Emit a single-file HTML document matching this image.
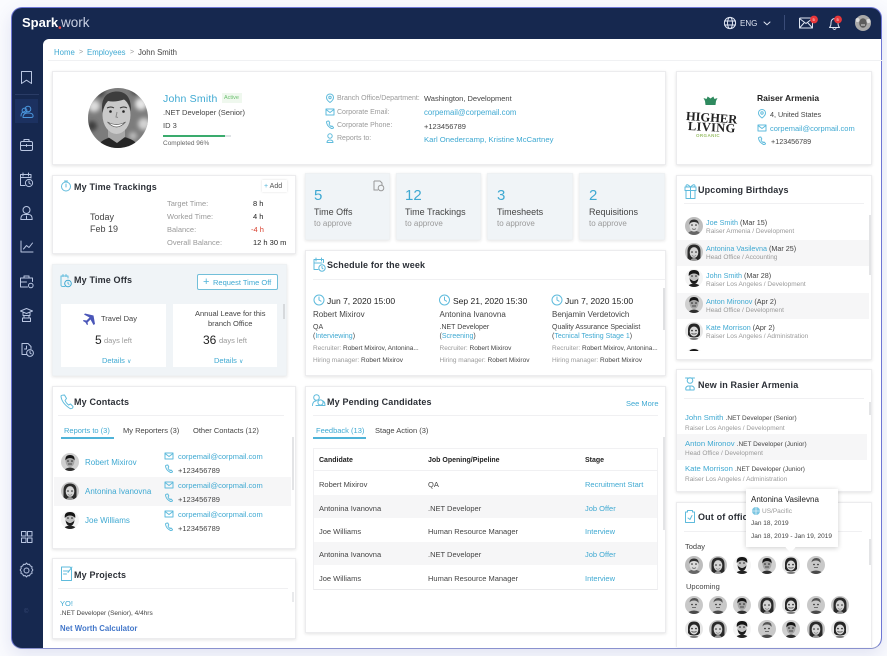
<!DOCTYPE html>
<html lang="en"><head><meta charset="utf-8"><title>Spark.work</title>
<style>
*{box-sizing:border-box}
html,body{margin:0;padding:0;width:887px;height:656px;overflow:hidden;background:#fafbfe;font-family:"Liberation Sans",sans-serif;color:#333}
.win{position:absolute;left:11px;top:7px;width:871px;height:642px;background:#16284f;border:1.5px solid #6d76d4;border-bottom-color:#8a92cf;border-radius:11px;box-shadow:0 6px 18px rgba(70,80,170,.14)}
.panel{position:absolute;left:43px;top:39px;width:838px;height:609px;background:#fff;border-top-left-radius:6px;border-bottom-right-radius:10px}
.card{position:absolute;background:#fff;border:1px solid #ececee;box-shadow:0 1px 3px rgba(0,0,0,.11)}
.soft{background:#f0f4f7;border-color:#eef1f3}
.t{position:absolute;line-height:0;white-space:nowrap;font-size:7.5px;color:#444;margin-top:.6px}
.l{color:#3fa9d2}.g{color:#9a9a9a}.d{color:#222}
.h{font-weight:bold;font-size:9px;color:#2b2f36;letter-spacing:.15px}
.s{font-size:6.5px}
.rect{position:absolute}
svg.ov{position:absolute;left:0;top:0;z-index:3;pointer-events:none}
.txt{position:absolute;left:0;top:0;width:887px;height:656px;z-index:4;filter:blur(.2px)}
.tip{position:absolute;left:746px;top:489px;width:92px;height:58px;background:#fff;box-shadow:0 1px 5px rgba(0,0,0,.2);z-index:5}
.tip:after{content:"";position:absolute;left:41px;top:55px;width:7px;height:7px;background:#fff;transform:rotate(45deg)}
.ic{fill:none;stroke:#5fbbdc;stroke-width:1;stroke-linecap:round;stroke-linejoin:round}
.nv{fill:none;stroke:#b9c6e2;stroke-width:1;stroke-linecap:round;stroke-linejoin:round}
</style></head><body>
<div class="win"></div><div class="panel"></div>
<div class="rect" style="left:15px;top:99px;width:23px;height:24px;background:#1c3160"></div>
<div class="rect" style="left:15px;top:94px;width:24px;height:1px;background:#2a3c66"></div>
<div class="rect" style="left:784px;top:15px;width:1px;height:15px;background:#3a4c78"></div>
<div class="rect" style="left:48px;top:60px;width:834px;height:1px;background:#f0f1f3"></div>

<!-- cards -->
<div class="card" style="left:52px;top:71px;width:614px;height:94px"></div>
<div class="card" style="left:676px;top:71px;width:196px;height:94px"></div>
<div class="card" style="left:52px;top:175px;width:244px;height:79px"></div>
<div class="card soft" style="left:52px;top:264px;width:235px;height:112px"></div>
<div class="rect" style="left:61px;top:304px;width:105px;height:63px;background:#fff"></div>
<div class="rect" style="left:173px;top:304px;width:104px;height:63px;background:#fff"></div>
<div class="rect" style="left:283px;top:304px;width:2px;height:15px;background:#d6d9dc"></div>
<div class="rect" style="left:197px;top:274px;width:81px;height:16px;border:1px solid #72bfd9;border-radius:2px;background:#fff"></div>
<div class="card" style="left:52px;top:386px;width:244px;height:163px"></div>
<div class="card" style="left:52px;top:558px;width:244px;height:81px"></div>
<div class="card soft" style="left:305px;top:173px;width:85px;height:67px"></div>
<div class="card soft" style="left:396px;top:173px;width:85px;height:67px"></div>
<div class="card soft" style="left:487px;top:173px;width:86px;height:67px"></div>
<div class="card soft" style="left:579px;top:173px;width:86px;height:67px"></div>
<div class="card" style="left:305px;top:250px;width:361px;height:126px"></div>
<div class="card" style="left:305px;top:386px;width:361px;height:247px"></div>
<div class="card" style="left:676px;top:175px;width:196px;height:185px"></div>
<div class="card" style="left:676px;top:369px;width:196px;height:123px"></div>
<div class="card" style="left:676px;top:502px;width:196px;height:145px;border-bottom:0;box-shadow:0 0 2px rgba(0,0,0,.08)"></div>

<!-- dividers and rows -->
<div class="rect" style="left:58px;top:415px;width:226px;height:1px;background:#f0f0f2"></div>
<div class="rect" style="left:58px;top:588px;width:230px;height:1px;background:#f0f0f2"></div>
<div class="rect" style="left:313px;top:279px;width:352px;height:1px;background:#f0f0f2"></div>
<div class="rect" style="left:313px;top:415px;width:345px;height:1px;background:#f0f0f2"></div>
<div class="rect" style="left:684px;top:203px;width:180px;height:1px;background:#f0f0f2"></div>
<div class="rect" style="left:684px;top:398px;width:180px;height:1px;background:#f0f0f2"></div>
<div class="rect" style="left:684px;top:531px;width:178px;height:1px;background:#f0f0f2"></div>
<div class="rect" style="left:61px;top:437px;width:53px;height:1.5px;background:#4fb3d8"></div>
<div class="rect" style="left:313px;top:437px;width:53px;height:1.5px;background:#4fb3d8"></div>
<div class="rect" style="left:54px;top:477px;width:237px;height:29px;background:#f6f6f7"></div>
<div class="rect" style="left:292px;top:437px;width:2px;height:53px;background:#e3e4e6"></div>
<div class="rect" style="left:292px;top:592px;width:2px;height:10px;background:#e9eaec"></div>
<div class="rect" style="left:663px;top:288px;width:2px;height:42px;background:#dfe0e2"></div>
<div class="rect" style="left:663px;top:437px;width:2px;height:93px;background:#e3e4e6"></div>
<div class="rect" style="left:313px;top:448px;width:345px;height:142px;border:1px solid #f1f1f3;border-bottom-color:#eaeaec"></div>
<div class="rect" style="left:314px;top:470px;width:343px;height:1px;background:#f0f0f2"></div>
<div class="rect" style="left:314px;top:495px;width:343px;height:23px;background:#f6f6f7"></div>
<div class="rect" style="left:314px;top:542px;width:343px;height:23px;background:#f6f6f7"></div>
<div class="rect" style="left:677px;top:240px;width:192px;height:26px;background:#f6f6f7"></div>
<div class="rect" style="left:677px;top:293px;width:192px;height:26px;background:#f6f6f7"></div>
<div class="rect" style="left:869px;top:215px;width:2px;height:60px;background:#e3e4e6"></div>
<div class="rect" style="left:677px;top:434px;width:190px;height:26px;background:#f6f6f7"></div>
<div class="rect" style="left:869px;top:402px;width:2px;height:13px;background:#e3e4e6"></div>
<div class="rect" style="left:869px;top:539px;width:2px;height:26px;background:#e3e4e6"></div>
<div class="rect" style="left:163px;top:135px;width:68px;height:2px;background:#dfe3e6"></div>
<div class="rect" style="left:163px;top:135px;width:62px;height:2px;background:#3aab6d"></div>
<div class="rect" style="left:222px;top:93px;width:20px;height:10px;background:#eff8ee"></div>
<div class="rect" style="left:262px;top:180px;width:25px;height:12px;background:#fff;box-shadow:0 0 2px rgba(0,0,0,.14)"></div>

<svg class="ov" width="887" height="656" viewBox="0 0 887 656" xmlns="http://www.w3.org/2000/svg">
<defs>
<clipPath id="c"><circle cx="9" cy="9" r="9"/></clipPath>
<clipPath id="big"><circle cx="118" cy="118" r="30"/></clipPath>
<clipPath id="birth"><rect x="677" y="204" width="192" height="147"/></clipPath>
<filter id="b1"><feGaussianBlur stdDeviation=".35"/></filter>
<filter id="b2"><feGaussianBlur stdDeviation="2"/></filter>
<g id="eyes"><circle cx="7" cy="8" r=".8" fill="#222"/><circle cx="11" cy="8" r=".8" fill="#222"/></g>
<symbol id="a1" width="18" height="18" viewBox="0 0 18 18"><g clip-path="url(#c)" filter="url(#b1)"><rect width="18" height="18" fill="#bdbdbd"/><path d="M2 18q1-4 7-4.500 6 .5 7 4.500Z" fill="#666"/><ellipse cx="9" cy="9" rx="4.500" ry="5.600" fill="#dcdcdc"/><path d="M4.300 8Q4 2.500 9 2.500T13.700 8Q13 5 9 5T4.300 8Z" fill="#333"/><use href="#eyes"/><path d="M7 11.700q2 1.300 4 0" stroke="#555" fill="none" stroke-width=".8"/></g></symbol>
<symbol id="a2" width="18" height="18" viewBox="0 0 18 18"><g clip-path="url(#c)" filter="url(#b1)"><rect width="18" height="18" fill="#c4c4c4"/><path d="M2.500 18V8.500q0-7 6.500-7t6.500 7V18Z" fill="#2c2c2c"/><ellipse cx="9" cy="9.500" rx="4.300" ry="5.400" fill="#d6d6d6"/><path d="M5 18q1-2.500 4-3 3 .5 4 3Z" fill="#999"/><use href="#eyes" y="1"/><path d="M7 12.500q2 1.300 4 0" stroke="#666" fill="#fff" stroke-width=".7"/></g></symbol>
<symbol id="a3" width="18" height="18" viewBox="0 0 18 18"><g clip-path="url(#c)" filter="url(#b1)"><rect width="18" height="18" fill="#f4f4f4"/><path d="M2.500 18q1-3 6.500-3.500 5.500 .5 6.500 3.500Z" fill="#222"/><ellipse cx="9" cy="8" rx="4.600" ry="5.800" fill="#c0c0c0"/><path d="M3.800 7Q3 1 9 1t5.200 6Q12 4.500 9 4.500T3.800 7Z" fill="#141414"/><path d="M4.500 9q.5 5.500 4.500 6 4-.5 4.500-6-1 2.500-4.500 2.500T4.500 9Z" fill="#1e1e1e"/><use href="#eyes" y="-1"/><path d="M7.500 11.500h3" stroke="#ddd" stroke-width=".7"/></g></symbol>
<symbol id="a4" width="18" height="18" viewBox="0 0 18 18"><g clip-path="url(#c)" filter="url(#b1)"><rect width="18" height="18" fill="#cfcfcf"/><path d="M3 18q1-3 6-3.500 5 .5 6 3.500Z" fill="#2e2e2e"/><ellipse cx="9" cy="8.500" rx="4.400" ry="5.400" fill="#a4a4a4"/><path d="M4.400 7.500Q4 2 9 2t4.600 5.500Q12 5 9 5T4.400 7.500Z" fill="#151515"/><use href="#eyes"/><path d="M7 11h4" stroke="#333" stroke-width=".8"/></g></symbol>
<symbol id="a5" width="18" height="18" viewBox="0 0 18 18"><g clip-path="url(#c)" filter="url(#b1)"><rect width="18" height="18" fill="#e6e6e6"/><path d="M3 13V8q0-6.500 6-6.500T15 8v5l-2 2H5Z" fill="#262626"/><ellipse cx="9" cy="9.500" rx="4.300" ry="5" fill="#dadada"/><path d="M4 18q1-2.500 5-3 4 .5 5 3Z" fill="#7c7c7c"/><use href="#eyes" y=".6"/><path d="M6.600 11.500q2.400 2 4.800 0Z" stroke="#555" fill="#fff" stroke-width=".6"/></g></symbol>
<symbol id="a6" width="18" height="18" viewBox="0 0 18 18"><g clip-path="url(#c)" filter="url(#b1)"><rect width="18" height="18" fill="#c8c8c8"/><path d="M2 18q1-3 7-3.500 6 .5 7 3.500Z" fill="#4a4a4a"/><ellipse cx="9" cy="8.500" rx="4.500" ry="5.600" fill="#c8c8c8"/><path d="M4.400 6.500Q5 2 9.500 2t4 5Q12 4.500 9 4.500T4.400 6.500Z" fill="#555"/><use href="#eyes" y=".5"/><path d="M7 11.500h4" stroke="#555" stroke-width=".8"/></g></symbol>
</defs>

<circle cx="59.800" cy="27.600" r="1.300" fill="#e8433f"/>

<!-- nav icons -->
<g class="nv">
<path d="M21.500 71.500h10v12l-5-3.300-5 3.300Z"/>
<g style="stroke:#4a96dd">
<circle cx="28" cy="109" r="2.800"/><path d="M21 116q0-4 4-4.500M23 117.500q0-4.500 5-4.500t5 2.500q.5 2-2 2Z"/><circle cx="24.500" cy="110.500" r="2.400"/>
</g>
<rect x="20.500" y="141.500" width="12" height="9" rx="1.500"/><path d="M24 141.500v-2h5v2M20.500 145.500h12M26.500 144.500v2"/>
<path d="M31 178v-3.500h-10.500v11H25M23 173v3M28.500 173v3M20.500 177.500h10.500"/><circle cx="29" cy="183" r="3.600"/><path d="M29 181v2l1.500 1"/>
<circle cx="26.500" cy="210" r="3.500"/><path d="M20.800 219.500q0-5 3.700-5h4q3.700 0 3.700 5ZM26.500 216v3"/>
<path d="M21 241v11h12M23.500 249l3-3.500 2.500 2 3.500-4.500"/>
<path d="M20.500 278h12v3.500M20.500 278v9h7M24 278v-2h5v2M20.500 282h6"/><circle cx="30.800" cy="285.500" r="2.300"/>
<path d="M20.500 311l6-2.500 6 2.500-6 2.500ZM23 313v2.500h7V313M22.500 318h8v3.500h-8ZM24 318v-2.500M29 318v-2.500"/>
<path d="M22 343.500h6l3 3v2M22 343.500v11h5"/><circle cx="30" cy="353" r="3.400"/><path d="M30 351v2l1.200 .8M26.500 346v3h-2"/>
<rect x="21.500" y="531.500" width="4.500" height="4.500"/><rect x="27.500" y="531.500" width="4.500" height="4.500"/><rect x="21.500" y="538" width="4.500" height="4.500"/><rect x="27.500" y="538" width="4.500" height="4.500"/>
<circle cx="26.500" cy="570.500" r="2.500"/><path d="M26.500 564.500l1.200 1.400 1.800-.2 .8 1.700 1.700.7-.2 1.900 1.100 1.500-1.100 1.500.2 1.900-1.700.7-.8 1.700-1.800-.2-1.200 1.400-1.200-1.400-1.800.2-.8-1.700-1.700-.7.2-1.900-1.100-1.500 1.100-1.500-.2-1.900 1.700-.7.8-1.700 1.800.2Z" transform="translate(0,-1.500)"/>
</g>

<!-- topbar icons -->
<g class="nv" style="stroke:#dfe5f2">
<circle cx="730" cy="23" r="5.600"/><ellipse cx="730" cy="23" rx="2.500" ry="5.600"/><path d="M724.500 21h11M724.500 25h11"/>
<path d="M764 22l3 2.800 3-2.800"/>
<rect x="799.500" y="18" width="13" height="10" rx="1"/><path d="M799.500 18.500l6.500 5 6.500-5M799.500 28l4.500-5M812.500 28l-4.500-5"/>
<path d="M829.500 27.500q1.500-1.500 1.500-4.500 0-4 3.500-4.500 3.500.5 3.500 4.500 0 3 1.500 4.500ZM833 28.500q1.500 2 3 0"/>
</g>
<circle cx="814" cy="19.500" r="3.900" fill="#e8373a"/><circle cx="838" cy="19.500" r="3.900" fill="#e8373a"/>
<g filter="url(#b1)"><circle cx="863" cy="23" r="8" fill="#a9a9a9"/><ellipse cx="863" cy="23" rx="3.800" ry="4.800" fill="#5c5c5c"/><circle cx="857.500" cy="20" r="2" fill="#ddd"/><circle cx="868.500" cy="21" r="2" fill="#ddd"/><path d="M861 25h4" stroke="#ddd"/></g>

<!-- main avatar -->
<g clip-path="url(#big)">
<rect x="88" y="88" width="60" height="60" fill="#7c7c7c"/>
<g filter="url(#b2)"><circle cx="94" cy="106" r="6" fill="#dcdcdc"/><circle cx="141" cy="104" r="6" fill="#e6e6e6"/><circle cx="92" cy="126" r="5" fill="#3e3e3e"/><circle cx="144" cy="124" r="6" fill="#d2d2d2"/><circle cx="100" cy="92" r="5" fill="#444"/><circle cx="136" cy="90" r="5" fill="#444"/><circle cx="133" cy="136" r="4" fill="#bbb"/></g>
<g filter="url(#b1)">
<path d="M97 148q3-10 21-12 18 2 21 12Z" fill="#262626"/>
<path d="M108 128h17v9l-8 6-9-6Z" fill="#a8a8a8"/>
<ellipse cx="116.500" cy="115" rx="14" ry="19" fill="#c9c9c9"/>
<path d="M102.500 113q-3-20 13-21.500 16-1 15.500 20-2-9-7-12-9 3-16 1.500-4 4-5.500 12Z" fill="#3c3c3c"/>
<path d="M107 108q4-2 7 0M120 108q4-2 7 0" stroke="#333" stroke-width="1" fill="none"/>
<circle cx="110.500" cy="111.500" r="1.300" fill="#222"/><circle cx="123.500" cy="111.500" r="1.300" fill="#222"/>
<path d="M107.500 122q9 5 18 0-9 10-18 0Z" fill="#fff" stroke="#555" stroke-width=".7"/>
<path d="M117 112l-1 5 2 .5" stroke="#8a8a8a" fill="none"/>
</g>
</g>

<!-- card title icons -->
<g class="ic">
<circle cx="66" cy="186.500" r="4.500"/><path d="M64.500 181h3M66 184v3"/>
<path d="M61 276v9q0 1.500 2 1.500h2M61 276h7v2M63 274.500v2M66 274.500v2"/><circle cx="68" cy="283.500" r="3.300" style="stroke:#3fa9d2"/><path d="M68 282v1.500l1 .8"/>
<path d="M61 396q.5 7 9 12.500 3 .5 3-2l-2.500-2.500-2 1q-2.500-2-3.500-4.500l1.500-2-2-3.500q-3 0-3.500 1Z"/>
<path d="M61.500 567h8.500l1.500 1.500v12h-10ZM63.500 571h5.500M63.500 574h3M72 567l-4 5.500"/>
<path d="M314 259.500h9.500v3M314 259.500v10h4M316 258v3M321.500 258v3M314 263h8"/><circle cx="322" cy="268" r="3.200"/><path d="M322 266.500v1.500l1 .8"/>
<circle cx="316.500" cy="397.500" r="2.800"/><circle cx="320.500" cy="402.500" r="2.600"/><path d="M312.500 405.500q.3-4.500 3.500-4.500M316 405.500h9q0-3.500-2-4.500"/>
<path d="M685 187h11v3.500h-11ZM686 190.500h9v8h-9ZM690.500 187v11.500M690.500 187q-4-4-4.500-1 0 1 4.500 1 4-4 4.500-1 0 1-4.500 1"/>
<circle cx="690" cy="380.500" r="2.800"/><path d="M685.500 378h9M686 390q-1-3 2-4h4q3 1 2 4ZM690 386v4"/>
<path d="M685.500 512h2v-1.500h5v1.500h2v10.500h-9ZM688 518l2 1.500 2-4"/>
<path d="M330 94c-2.500 0-3.500 2-3.500 3.500 0 2.500 3.500 5 3.500 5s3.500-2.500 3.500-5c0-1.500-1-3.500-3.500-3.500Z"/><circle cx="330" cy="97.500" r="1.200"/>
<rect x="326" y="109" width="8" height="6"/><path d="M326 109.500l4 3 4-3"/>
<path d="M326.500 122q.3 4 5 6.500 2 .2 2-1l-1.500-1.500-1 .5q-1.500-1-2-2.500l.8-1-1-2q-2 0-2.300 1Z"/>
<circle cx="330" cy="136" r="2.200"/><path d="M327 142.500q0-2.500 3-2.500t3 2.500Z"/>
<path d="M762 109.500c-2.500 0-3.500 2-3.500 3.500 0 2.500 3.500 5 3.500 5s3.500-2.500 3.500-5c0-1.500-1-3.500-3.500-3.500Z"/><circle cx="762" cy="113" r="1.200"/>
<rect x="758" y="125" width="8" height="6"/><path d="M758 125.500l4 3 4-3"/>
<path d="M758.500 138q.3 4 5 6.500 2 .2 2-1l-1.500-1.500-1 .5q-1.500-1-2-2.500l.8-1-1-2q-2 0-2.300 1Z"/>
<g id="q">
<rect x="165" y="453" width="8" height="6"/><path d="M165 453.500l4 3 4-3"/><path d="M165.500 466q.3 4 5 6.500 2 .2 2-1l-1.500-1.500-1 .5q-1.500-1-2-2.500l.8-1-1-2q-2 0-2.300 1Z"/>
</g>
<use href="#q" y="29"/><use href="#q" y="58"/>
<circle cx="319" cy="300" r="5"/><path d="M319 297v3l2 1.200"/>
<circle cx="444.500" cy="300" r="5"/><path d="M444.500 297v3l2 1.200"/>
<circle cx="557" cy="300" r="5"/><path d="M557 297v3l2 1.200"/>
</g>
<path d="M374 181h6l2 2v2.500M374 181v9h4" fill="none" stroke="#999"/><circle cx="381" cy="188" r="2.800" fill="none" stroke="#999"/>
<path d="M97 312L93.500 315.500 95 324 93.500 325 90.500 319.500 87.500 322.500 88 324.500 87 325 85.500 322.500 83 321 83.500 320 86.500 320.500 89.500 317.500 84 314.500 85 313.500 93.500 315.500Z" fill="#4a56b8"/>

<!-- contacts -->
<use href="#a4" x="61" y="453"/><use href="#a2" x="61" y="482"/><use href="#a3" x="61" y="511"/>
<!-- birthdays -->
<g clip-path="url(#birth)">
<use href="#a1" x="685" y="217"/><use href="#a2" x="685" y="243"/><use href="#a3" x="685" y="269"/><use href="#a4" x="685" y="295"/><use href="#a5" x="685" y="322"/><use href="#a3" x="685" y="348"/>
</g>
<!-- out of office -->
<use href="#a1" x="685" y="556"/><use href="#a2" x="709" y="556"/><use href="#a3" x="733" y="556"/><use href="#a4" x="758" y="556"/><use href="#a5" x="782" y="556"/><use href="#a6" x="807" y="556"/>
<use href="#a6" x="685" y="596"/><use href="#a6" x="709" y="596"/><use href="#a4" x="733" y="596"/><use href="#a2" x="758" y="596"/><use href="#a5" x="782" y="596"/><use href="#a6" x="807" y="596"/><use href="#a2" x="831" y="596"/>
<use href="#a5" x="685" y="620"/><use href="#a2" x="709" y="620"/><use href="#a3" x="733" y="620"/><use href="#a6" x="758" y="620"/><use href="#a4" x="782" y="620"/><use href="#a2" x="807" y="620"/><use href="#a5" x="831" y="620"/>

<path d="M705 101l-1.500-3 3 1 1.200-2.500 2.800 2 2.800-2 1.200 2.500 3-1-1.500 3-.5 4h-10Z" fill="#2f8a5f"/>
</svg>

<div class="txt">
<span class="t" style="left:22px;top:22.500px;font-size:13px;font-weight:bold;color:#fff">Spark</span>
<span class="t" style="left:61px;top:22.500px;font-size:13.500px;color:#c9d0e2">work</span>
<span class="t" style="left:740px;top:23px;font-size:8px;color:#dfe5f2">ENG</span>
<span class="t" style="left:812.500px;top:19.500px;font-size:4px;color:#fff">5</span>
<span class="t" style="left:836.500px;top:19.500px;font-size:4px;color:#fff">5</span>
<span class="t" style="left:24px;top:611px;font-size:6px;color:#3a4c78">©</span>

<span class="t l" style="left:54px;top:52px;font-size:7.800px">Home</span>
<span class="t g" style="left:79px;top:52px;font-size:7px">&gt;</span>
<span class="t l" style="left:87px;top:52px;font-size:7.800px">Employees</span>
<span class="t g" style="left:130px;top:52px;font-size:7px">&gt;</span>
<span class="t" style="left:138px;top:52px;font-size:7.800px">John Smith</span>

<span class="t l" style="left:163px;top:98px;font-size:10.500px;letter-spacing:.2px">John Smith</span>
<span class="t" style="left:224px;top:97.500px;font-size:5.500px;color:#6cc070">Active</span>
<span class="t" style="left:163px;top:112.500px">.NET Developer (Senior)</span>
<span class="t" style="left:163px;top:125.500px">ID 3</span>
<span class="t" style="left:163px;top:143px;font-size:6.500px;color:#666">Completed 96%</span>

<span class="t g" style="left:337px;top:98.500px;font-size:7px">Branch Office/Department:</span>
<span class="t g" style="left:337px;top:112px;font-size:7px">Corporate Email:</span>
<span class="t g" style="left:337px;top:125px;font-size:7px">Corporate Phone:</span>
<span class="t g" style="left:337px;top:138px;font-size:7px">Reports to:</span>
<span class="t" style="left:424px;top:98.500px">Washington, Development</span>
<span class="t l" style="left:424px;top:112.500px;font-size:7.800px">corpemail@corpemail.com</span>
<span class="t" style="left:424px;top:126px">+123456789</span>
<span class="t l" style="left:424px;top:139px;font-size:7.700px">Karl Onedercamp, Kristine McCartney</span>

<span class="t" style="left:686px;top:115px;font:bold 12.500px 'Liberation Serif',serif;color:#222;transform:rotate(4deg);transform-origin:left center;line-height:0">HIGHER</span>
<span class="t" style="left:688px;top:125.500px;font:bold 12.500px 'Liberation Serif',serif;color:#222;transform:rotate(3deg);transform-origin:left center;line-height:0;letter-spacing:.3px">LIVING</span>
<span class="t" style="left:696px;top:135.500px;font-size:4.500px;font-weight:bold;color:#9bc06a;letter-spacing:.4px">ORGANIC</span>
<span class="t d" style="left:757px;top:97px;font-size:8.500px;font-weight:bold">Raiser Armenia</span>
<span class="t" style="left:770px;top:114.500px;font-size:7.200px">4, United States</span>
<span class="t l" style="left:770px;top:128px;font-size:7.500px">corpemail@corpmail.com</span>
<span class="t" style="left:771px;top:141.500px;font-size:7.200px">+123456789</span>

<span class="t h" style="left:74px;top:186.500px">My Time Trackings</span>
<span class="t g" style="left:264px;top:186px;font-size:7px;color:#555"><span style="color:#4fb3d8">+</span> Add</span>
<span class="t" style="left:90px;top:216px;font-size:9px">Today</span>
<span class="t" style="left:90px;top:228.500px;font-size:9px">Feb 19</span>
<span class="t g" style="left:167px;top:203px">Target Time:</span>
<span class="t g" style="left:167px;top:216px">Worked Time:</span>
<span class="t g" style="left:167px;top:229px">Balance:</span>
<span class="t g" style="left:167px;top:242px">Overall Balance:</span>
<span class="t d" style="left:253px;top:203px;font-size:7.500px">8 h</span>
<span class="t d" style="left:253px;top:216px;font-size:7.500px">4 h</span>
<span class="t" style="left:251px;top:229px;font-size:7.500px;color:#d8402f">-4 h</span>
<span class="t d" style="left:253px;top:242px;font-size:7.500px">12 h 30 m</span>

<span class="t h" style="left:74px;top:279px">My Time Offs</span>
<span class="t l" style="left:203px;top:281.500px;font-size:11px;color:#4fb3d8">+</span>
<span class="t l" style="left:213px;top:282px;font-size:7.500px">Request Time Off</span>
<span class="t" style="left:101px;top:318px;font-size:7.500px">Travel Day</span>
<span class="t d" style="left:95px;top:339px;font-size:12px">5</span>
<span class="t g" style="left:104px;top:340px">days left</span>
<span class="t l" style="left:102px;top:360.500px">Details <span style="font-size:6px">&#x2228;</span></span>
<span class="t" style="left:195px;top:313px">Annual Leave for this</span>
<span class="t" style="left:208px;top:323px">branch Office</span>
<span class="t d" style="left:203px;top:339px;font-size:12px">36</span>
<span class="t g" style="left:219px;top:340px">days left</span>
<span class="t l" style="left:214px;top:360.500px">Details <span style="font-size:6px">&#x2228;</span></span>

<span class="t h" style="left:74px;top:401px">My Contacts</span>
<span class="t l" style="left:64px;top:430.500px">Reports to (3)</span>
<span class="t" style="left:123px;top:430.500px">My Reporters (3)</span>
<span class="t" style="left:193px;top:430.500px">Other Contacts (12)</span>
<span class="t l" style="left:85px;top:462.500px;font-size:8px">Robert Mixirov</span>
<span class="t l" style="left:85px;top:491.500px;font-size:8px">Antonina Ivanovna</span>
<span class="t l" style="left:85px;top:520.500px;font-size:8px">Joe Williams</span>
<span class="t l" style="left:178px;top:456.500px;font-size:7.500px">corpemail@corpmail.com</span>
<span class="t l" style="left:178px;top:485.500px;font-size:7.500px">corpemail@corpmail.com</span>
<span class="t l" style="left:178px;top:514.500px;font-size:7.500px">corpemail@corpmail.com</span>
<span class="t" style="left:178px;top:470px">+123456789</span>
<span class="t" style="left:178px;top:499px">+123456789</span>
<span class="t" style="left:178px;top:528px">+123456789</span>

<span class="t h" style="left:74px;top:574px">My Projects</span>
<span class="t l" style="left:60px;top:603.500px;font-size:7.500px">YO!</span>
<span class="t" style="left:60px;top:613.500px;font-size:6.500px">.NET Developer (Senior), 4/4hrs</span>
<span class="t" style="left:60px;top:628.500px;font-size:7.800px;font-weight:bold;color:#4377c9">Net Worth Calculator</span>
<div class="rect" style="left:54px;top:631px;width:238px;height:7px;background:#fff"></div>

<span class="t l" style="left:314px;top:195.500px;font-size:15px">5</span><span class="t" style="left:314px;top:211.500px;font-size:9px">Time Offs</span><span class="t g" style="left:314px;top:223.500px;font-size:8px">to approve</span>
<span class="t l" style="left:405px;top:195.500px;font-size:15px">12</span><span class="t" style="left:405px;top:211.500px;font-size:9px">Time Trackings</span><span class="t g" style="left:405px;top:223.500px;font-size:8px">to approve</span>
<span class="t l" style="left:497px;top:195.500px;font-size:15px">3</span><span class="t" style="left:497px;top:211.500px;font-size:9px">Timesheets</span><span class="t g" style="left:497px;top:223.500px;font-size:8px">to approve</span>
<span class="t l" style="left:589px;top:195.500px;font-size:15px">2</span><span class="t" style="left:589px;top:211.500px;font-size:9px">Requisitions</span><span class="t g" style="left:589px;top:223.500px;font-size:8px">to approve</span>

<span class="t h" style="left:327px;top:264.500px">Schedule for the week</span>
<span class="t d" style="left:327px;top:300.500px;font-size:8.500px">Jun 7, 2020 15:00</span>
<span class="t" style="left:313px;top:314.500px;font-size:8px">Robert Mixirov</span>
<span class="t" style="left:313px;top:327px;font-size:7px">QA</span>
<span class="t" style="left:313px;top:336.500px;font-size:7px">(<span class="l">Interviewing</span>)</span>
<span class="t s" style="left:313px;top:348.500px"><span class="g">Recruiter:</span> Robert Mixirov, Antonina...</span>
<span class="t s" style="left:313px;top:360px"><span class="g">Hiring manager:</span> Robert Mixirov</span>
<span class="t d" style="left:453px;top:300.500px;font-size:8.500px">Sep 21, 2020 15:30</span>
<span class="t" style="left:439.500px;top:314.500px;font-size:8px">Antonina Ivanovna</span>
<span class="t" style="left:439.500px;top:327px;font-size:7px">.NET Developer</span>
<span class="t" style="left:439.500px;top:336.500px;font-size:7px">(<span class="l">Screening</span>)</span>
<span class="t s" style="left:439.500px;top:348.500px"><span class="g">Recruiter:</span> Robert Mixirov</span>
<span class="t s" style="left:439.500px;top:360px"><span class="g">Hiring manager:</span> Robert Mixirov</span>
<span class="t d" style="left:565px;top:300.500px;font-size:8.500px">Jun 7, 2020 15:00</span>
<span class="t" style="left:552px;top:314.500px;font-size:8px">Benjamin Verdetovich</span>
<span class="t" style="left:552px;top:327px;font-size:7px">Quality Assurance Specialist</span>
<span class="t" style="left:552px;top:336.500px;font-size:7px">(<span class="l">Tecnical Testing Stage 1</span>)</span>
<span class="t s" style="left:552px;top:348.500px"><span class="g">Recruiter:</span> Robert Mixirov, Antonina...</span>
<span class="t s" style="left:552px;top:360px"><span class="g">Hiring manager:</span> Robert Mixirov</span>

<span class="t h" style="left:327px;top:401px">My Pending Candidates</span>
<span class="t l" style="left:626px;top:403px">See More</span>
<span class="t l" style="left:316px;top:430.500px">Feedback (13)</span>
<span class="t" style="left:375px;top:430.500px">Stage Action (3)</span>
<span class="t d" style="left:319px;top:460.500px;font-size:7px;font-weight:bold">Candidate</span>
<span class="t d" style="left:428px;top:460.500px;font-size:7px;font-weight:bold">Job Opening/Pipeline</span>
<span class="t d" style="left:585px;top:460.500px;font-size:7px;font-weight:bold">Stage</span>
<span class="t" style="left:319px;top:484px">Robert Mixirov</span><span class="t" style="left:428px;top:484px">QA</span><span class="t l" style="left:585px;top:484px">Recruitment Start</span>
<span class="t" style="left:319px;top:508px">Antonina Ivanovna</span><span class="t" style="left:428px;top:508px">.NET Developer</span><span class="t l" style="left:585px;top:508px">Job Offer</span>
<span class="t" style="left:319px;top:531.500px">Joe Williams</span><span class="t" style="left:428px;top:531.500px">Human Resource Manager</span><span class="t l" style="left:585px;top:531.500px">Interview</span>
<span class="t" style="left:319px;top:554.500px">Antonina Ivanovna</span><span class="t" style="left:428px;top:554.500px">.NET Developer</span><span class="t l" style="left:585px;top:554.500px">Job Offer</span>
<span class="t" style="left:319px;top:578px">Joe Williams</span><span class="t" style="left:428px;top:578px">Human Resource Manager</span><span class="t l" style="left:585px;top:578px">Interview</span>

<span class="t h" style="left:698px;top:189.500px">Upcoming Birthdays</span>
<span class="t" style="left:706px;top:222.500px;font-size:7.200px"><span class="l">Joe Smith</span> (Mar 15)</span>
<span class="t g s" style="left:706px;top:231.500px">Raiser Armenia / Development</span>
<span class="t" style="left:706px;top:248.500px;font-size:7.200px"><span class="l">Antonina Vasilevna</span> (Mar 25)</span>
<span class="t g s" style="left:706px;top:257.500px">Head Office / Accounting</span>
<span class="t" style="left:706px;top:275px;font-size:7.200px"><span class="l">John Smith</span> (Mar 28)</span>
<span class="t g s" style="left:706px;top:284.500px">Raiser Los Angeles / Development</span>
<span class="t" style="left:706px;top:301px;font-size:7.200px"><span class="l">Anton Mironov</span> (Apr 2)</span>
<span class="t g s" style="left:706px;top:310.500px">Head Office / Development</span>
<span class="t" style="left:706px;top:327.500px;font-size:7.200px"><span class="l">Kate Morrison</span> (Apr 2)</span>
<span class="t g s" style="left:706px;top:336.500px">Raiser Los Angeles / Administration</span>

<span class="t h" style="left:698px;top:384px">New in Rasier Armenia</span>
<span class="t" style="left:685px;top:417.500px"><span class="l" style="font-size:7.700px">John Smith</span> <span class="s">.NET Developer (Senior)</span></span>
<span class="t g s" style="left:685px;top:428px">Raiser Los Angeles / Development</span>
<span class="t" style="left:685px;top:443px"><span class="l" style="font-size:7.700px">Anton Mironov</span> <span class="s">.NET Developer (Junior)</span></span>
<span class="t g s" style="left:685px;top:453.500px">Head Office / Development</span>
<span class="t" style="left:685px;top:468.500px"><span class="l" style="font-size:7.700px">Kate Morrison</span> <span class="s">.NET Developer (Junior)</span></span>
<span class="t g s" style="left:685px;top:479px">Raiser Los Angeles / Administration</span>

<span class="t h" style="left:698px;top:516.500px">Out of office</span>
<span class="t" style="left:685px;top:546px">Today</span>
<span class="t" style="left:686px;top:586px">Upcoming</span>
</div>

<div class="tip">
<span class="t d" style="left:5px;top:10px;font-size:8px">Antonina Vasilevna</span>
<span class="t g s" style="left:16px;top:22px">US/Pacific</span>
<svg style="position:absolute;left:5px;top:17px" width="10" height="10" viewBox="0 0 10 10"><circle cx="5" cy="5" r="4" fill="#7cc6e2"/><path d="M1 5h8M5 1v8" stroke="#fff" stroke-width=".6"/></svg>
<span class="t s" style="left:5px;top:34px">Jan 18, 2019</span>
<span class="t s" style="left:5px;top:47px">Jan 18, 2019 - Jan 19, 2019</span>
</div>
</body></html>
